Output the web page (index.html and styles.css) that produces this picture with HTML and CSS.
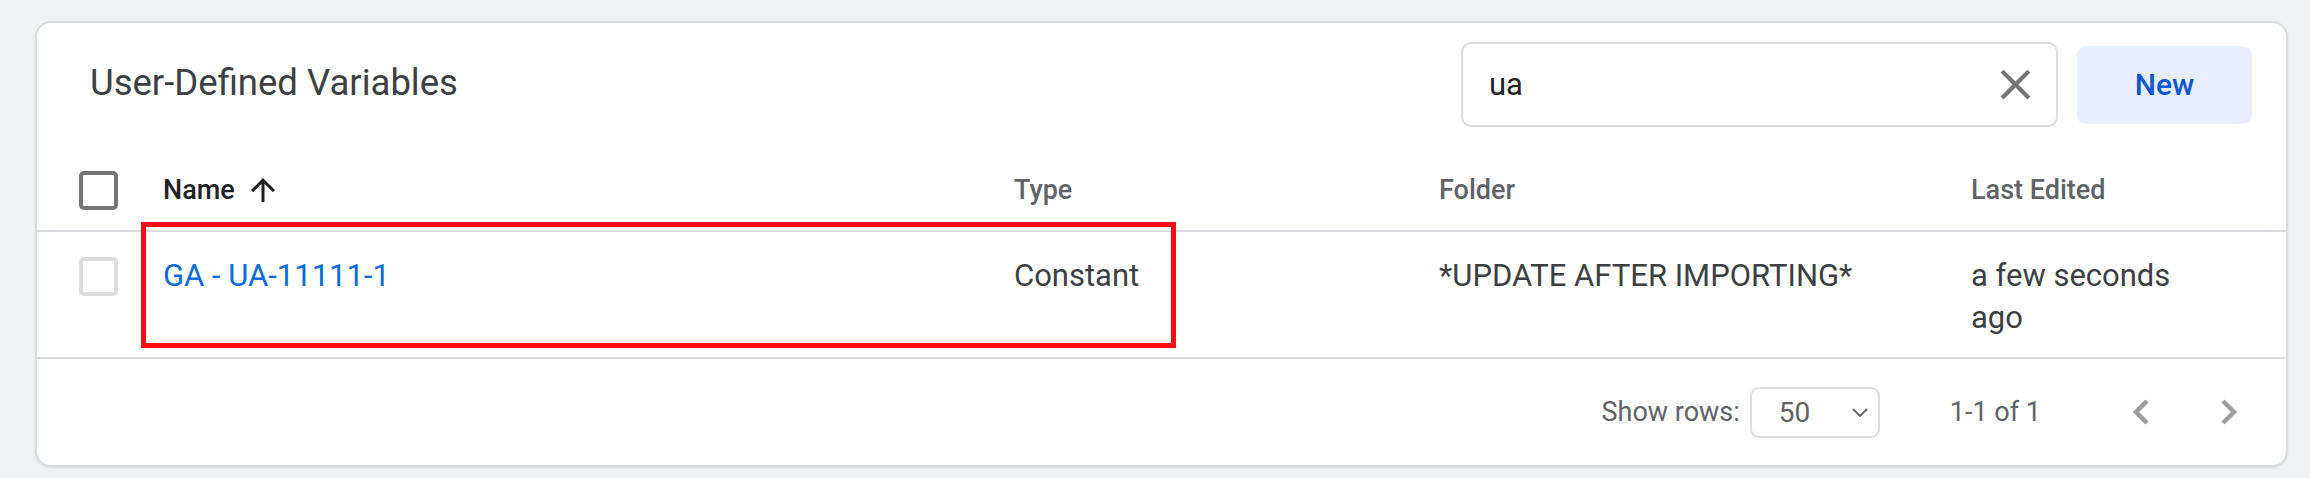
FILE: index.html
```html
<!DOCTYPE html>
<html lang="en">
<head>
<meta charset="utf-8">
<title>User-Defined Variables</title>
<link rel="stylesheet" href="styles.css">
</head>
<body>
<div class="card">
  <div class="topbar">
    <div class="title">User-Defined Variables</div>
    <div class="search">
      <span class="search-text">ua</span>
      <svg class="close" viewBox="0 0 24 24" width="51" height="51"><path d="M19 6.41L17.59 5 12 10.59 6.41 5 5 6.41 10.59 12 5 17.59 6.41 19 12 13.41 17.59 19 19 17.59 13.41 12z" fill="#757575"/></svg>
    </div>
    <button class="new-btn">New</button>
  </div>

  <div class="grid head">
    <div class="cell cb-cell"><span class="checkbox dark"></span></div>
    <div class="cell name-head">Name
      <svg class="sort" viewBox="0 0 24 24" width="36" height="36"><path d="M4 12l1.41 1.41L11 7.83V20h2V7.83l5.58 5.590L20 12l-8-8-8 8z" fill="#202124"/></svg>
    </div>
    <div class="cell">Type</div>
    <div class="cell">Folder</div>
    <div class="cell">Last Edited</div>
  </div>

  <div class="grid row">
    <div class="cell cb-cell"><span class="checkbox light"></span></div>
    <div class="cell"><a class="link">GA - UA-11111-1</a></div>
    <div class="cell">Constant</div>
    <div class="cell">*UPDATE AFTER IMPORTING*</div>
    <div class="cell">a few seconds ago</div>
  </div>

  <div class="footer">
    <span class="show-rows">Show rows:</span>
    <div class="select">
      <span>50</span>
      <svg class="select-chev" viewBox="0 0 16 9" width="16" height="9"><polyline points="1,1 8,8 15,1" fill="none" stroke="#5f6368" stroke-width="1.8"/></svg>
    </div>
    <span class="range">1-1 of 1</span>
    <span class="page-btn"><svg viewBox="0 0 18 26" width="18" height="26"><polyline points="15,2 4,13 15,24" fill="none" stroke="#9e9e9e" stroke-width="4.5"/></svg></span>
    <span class="page-btn"><svg viewBox="0 0 18 26" width="18" height="26"><polyline points="3,2 14,13 3,24" fill="none" stroke="#9e9e9e" stroke-width="4.5"/></svg></span>
  </div>

  <div class="highlight"></div>
</div>
</body>
</html>
```

FILE: styles.css
```css
html, body {
  margin: 0;
  padding: 0;
}

body {
  background: #f0f1f3;
  font-family: Roboto, "Liberation Sans", Arial, sans-serif;
  width: 2310px;
  height: 478px;
  overflow: hidden;
}

.card {
  position: relative;
  margin: 21px 22px 0 35px;
  background: #ffffff;
  border: 2px solid #dadce0;
  border-radius: 16px;
  box-shadow: 0 1px 2px rgba(60, 64, 67, 0.12);
}

.topbar {
  display: flex;
  align-items: center;
  padding: 19px 34px 0 53px;
}

.title {
  flex: 1;
  font-size: 36.5px;
  color: #3c4043;
  margin-top: -4px;
}

.search {
  box-sizing: border-box;
  width: 597px;
  height: 85px;
  border: 2px solid #dadce0;
  border-radius: 10px;
  display: flex;
  align-items: center;
  padding: 0 15px 0 26px;
}

.search-text {
  flex: 1;
  font-size: 31px;
  color: #202124;
}

.close {
  display: block;
}

.new-btn {
  margin-left: 19px;
  width: 175px;
  height: 78px;
  border: none;
  border-radius: 9px;
  background: #e7effc;
  color: #0b57d0;
  font-family: Roboto, "Liberation Sans", Arial, sans-serif;
  font-size: 30px;
  font-weight: 500;
  padding: 0;
}

.grid {
  display: grid;
  grid-template-columns: 84px 851px 425px 532px 1fr;
  padding: 0 70px 0 42px;
  border-bottom: 2px solid #dadce0;
}

.head {
  margin-top: 23px;
  height: 80px;
  align-items: center;
  font-size: 27px;
  font-weight: 500;
  color: #5f6368;
}

.name-head {
  display: flex;
  align-items: center;
  color: #202124;
}

.sort {
  display: block;
  margin-left: 10px;
}

.checkbox {
  display: block;
  box-sizing: border-box;
  width: 39px;
  height: 39px;
  border-radius: 5px;
}

.checkbox.dark {
  border: 4.5px solid #757575;
}

.checkbox.light {
  border: 4.5px solid #dcdcdc;
}

.row {
  padding-top: 23px;
  padding-bottom: 18px;
  font-size: 31px;
  line-height: 42px;
  color: #3c4043;
  align-items: start;
}

.row .cb-cell {
  height: 42px;
  display: flex;
  align-items: center;
}

.link {
  color: #0b6bdc;
  text-decoration: none;
}

.footer {
  height: 106px;
  display: flex;
  align-items: center;
  justify-content: flex-end;
  padding-right: 27px;
  font-size: 27px;
  color: #5f6368;
}

.show-rows {
  margin-right: 10px;
}

.select {
  box-sizing: border-box;
  width: 130px;
  height: 51px;
  border: 2px solid #dadce0;
  border-radius: 9px;
  display: flex;
  align-items: center;
  justify-content: space-between;
  padding: 0 10px 0 27px;
  font-size: 28px;
  color: #5f6368;
}

.select-chev {
  display: block;
}

.range {
  margin: 0 70px 0 70px;
}

.page-btn {
  width: 60px;
  height: 48px;
  display: flex;
  align-items: center;
  justify-content: center;
}

.page-btn + .page-btn {
  margin-left: 28px;
}

.highlight {
  position: absolute;
  left: 104px;
  top: 199px;
  width: 1035px;
  height: 126px;
  box-sizing: border-box;
  border: 5px solid #ff0a14;
  pointer-events: none;
}
```
